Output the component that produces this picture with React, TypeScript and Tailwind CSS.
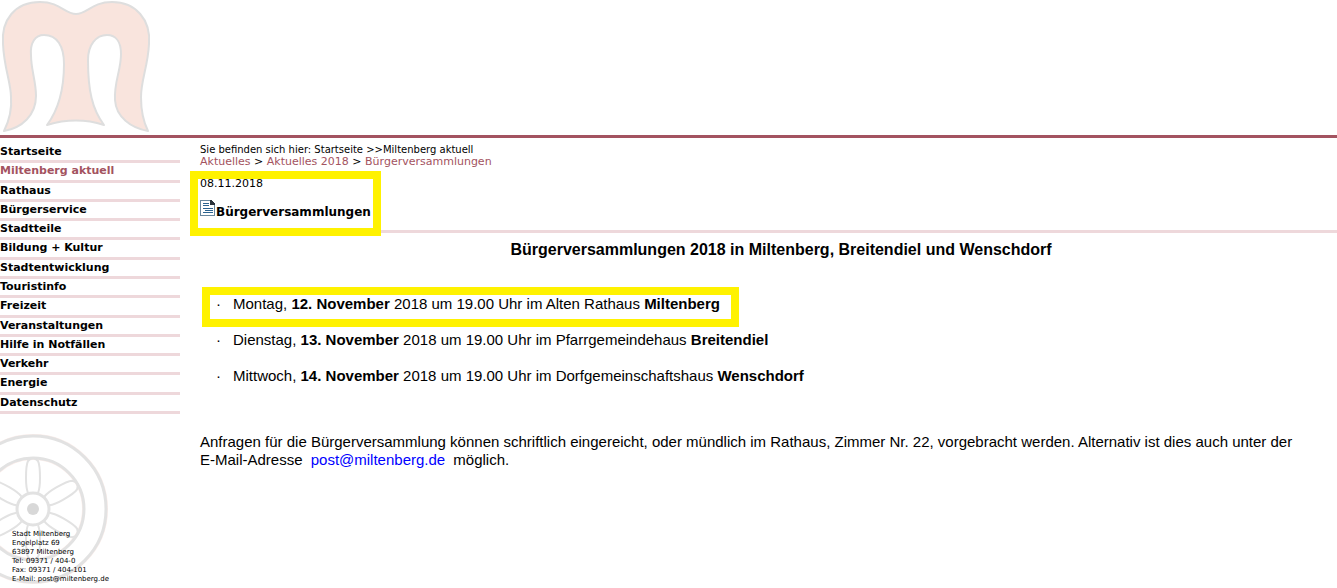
import React from 'react'

const navItems = [
  'Startseite',
  'Miltenberg aktuell',
  'Rathaus',
  'Bürgerservice',
  'Stadtteile',
  'Bildung + Kultur',
  'Stadtentwicklung',
  'Touristinfo',
  'Freizeit',
  'Veranstaltungen',
  'Hilfe in Notfällen',
  'Verkehr',
  'Energie',
  'Datenschutz',
]

const meetings = [
  { day: 'Montag', date: '12. November', place: 'im Alten Rathaus', town: 'Miltenberg', marked: true },
  { day: 'Dienstag', date: '13. November', place: 'im Pfarrgemeindehaus', town: 'Breitendiel', marked: false },
  { day: 'Mittwoch', date: '14. November', place: 'im Dorfgemeinschaftshaus', town: 'Wenschdorf', marked: false },
]

function Logo() {
  return (
    <svg width="152" height="134" viewBox="0 0 152 134" role="img" aria-label="Stadt Miltenberg">
      <path
        d="M4 131 C9 121 12 109 11 97 C11 83 4 68 3 44 C1 20 15 2 40 2 C60 2 65 14 76 14 C87 14 92 2 112 2 C136 2 151 20 149 44 C148 66 141 80 141 97 C141 110 143 121 148 131 C131 128 116 117 115 100 C114 81 121 71 121 54 C121 42 116 35 107 35 C96 35 88 45 88 60 C88 90 92 109 104 125 C85 119 67 119 47 125 C59 109 64 90 64 64 C64 46 57 35 44 35 C35 35 30 43 31 55 C31 70 36 81 36 96 C36 115 22 128 4 131 Z"
        fill="#f9e4dd"
        stroke="#dedede"
        strokeWidth="2"
        strokeLinejoin="round"
      />
    </svg>
  )
}

function Wheel() {
  return (
    <svg width="108" height="150" viewBox="0 0 108 150" aria-hidden="true">
      <g fill="none" stroke="#fbeeeb" strokeWidth="2">
        <circle cx="33" cy="75" r="74" />
        <circle cx="33" cy="75" r="50" />
      </g>
      <g fill="none" stroke="#e2e2e2" strokeWidth="3">
        <circle cx="33" cy="75" r="73" />
        <circle cx="33" cy="75" r="51" />
        <circle cx="33" cy="75" r="16" />
        {[0, 60, 120, 180, 240, 300].map((angle) => (
          <path
            key={angle}
            d="M28 59 C26 54 26 50 26 44 C26 37 26 31 28 27 Q33 21 38 27 C40 31 40 37 40 44 C40 50 40 54 38 59"
            strokeWidth="2"
            transform={`rotate(${angle} 33 75)`}
          />
        ))}
      </g>
      <circle cx="33" cy="75" r="6" fill="#d8d8d8" />
    </svg>
  )
}

function DocumentIcon() {
  return (
    <svg width="15" height="16" viewBox="0 0 15 16" shapeRendering="crispEdges" aria-hidden="true">
      <path d="M0 0H11L15 4V16H0Z" fill="#68879e" />
      <path d="M1 1H10V5H14V15H1Z" fill="#fff" />
      <path d="M10 0H12V1H13V2H14V3H15V5H10Z" fill="#2b333b" />
      <path d="M3 3H9V4H3ZM3 5H9V6H3ZM3 8H13V9H3ZM5 10H13V11H5ZM3 12H13V13H3Z" fill="#2b6390" />
    </svg>
  )
}

export default function App() {
  return (
    <div className="bg-white font-['DejaVu_Sans',Verdana,sans-serif] text-black">
      <header className="h-[138px] border-b-3 border-[#a35360]">
        <Logo />
      </header>

      <div className="flex">
        <aside className="w-[180px] shrink-0 pt-[6px]">
          <nav>
            <ul className="flex h-[270px] flex-col text-[11px] leading-4 font-bold">
              {navItems.map((item) => (
                <li key={item} className="flex-1 border-b-3 border-[#eed8db]">
                  <a href="#" className={item === 'Miltenberg aktuell' ? 'block text-[#a35360]' : 'block'}>
                    {item}
                  </a>
                </li>
              ))}
            </ul>
          </nav>

          <div className="mt-5 grid">
            <div className="col-start-1 row-start-1">
              <Wheel />
            </div>
            <address className="col-start-1 row-start-1 self-end pl-3 text-[7px] leading-[9px] whitespace-nowrap not-italic">
              Stadt Miltenberg
              <br />
              Engelplatz 69
              <br />
              63897 Miltenberg
              <br />
              Tel: 09371 / 404-0
              <br />
              Fax: 09371 / 404-101
              <br />
              E-Mail: post@miltenberg.de
            </address>
          </div>
        </aside>

        <main className="min-w-0 flex-1 pt-[6px] pl-5">
          <p className="text-[10px] leading-3">Sie befinden sich hier: Startseite &gt;&gt;Miltenberg aktuell</p>
          <p className="text-[11px] leading-3">
            <a href="#" className="text-[#a35360]">Aktuelles</a> &gt;{' '}
            <a href="#" className="text-[#a35360]">Aktuelles 2018</a> &gt;{' '}
            <a href="#" className="text-[#a35360]">Bürgerversammlungen</a>
          </p>

          <div className="relative mt-2 h-[57px] border-b-3 border-[#eed8db] pt-[2px]">
            <p className="text-[11px] leading-3">08.11.2018</p>
            <h2 className="mt-[10px] flex text-[12px] leading-4 font-bold">
              <DocumentIcon />
              <span className="pt-1 pl-px">Bürgerversammlungen</span>
            </h2>
            <div className="pointer-events-none absolute -top-[5px] -left-[10px] h-[65px] w-[191px] border-8 border-[#fff200]" />
          </div>

          <div className="pr-[11px] font-['Liberation_Sans',Arial,sans-serif] text-[15px] leading-[18px]">
            <h1 className="mt-2 pl-9 text-center text-[16px] font-bold">
              Bürgerversammlungen 2018 in Miltenberg, Breitendiel und Wenschdorf
            </h1>
            <ul className="mt-9 flex flex-col gap-[18px]">
              {meetings.map((meeting) => (
                <li key={meeting.date} className="relative flex pl-4">
                  <span className="w-[17px] shrink-0">·</span>
                  <span>
                    {meeting.day}, <b>{meeting.date}</b> 2018 um 19.00 Uhr {meeting.place} <b>{meeting.town}</b>
                  </span>
                  {meeting.marked && (
                    <span className="pointer-events-none absolute -top-2 left-[2px] h-10 w-[537px] border-8 border-[#fff200]" />
                  )}
                </li>
              ))}
            </ul>
            <p className="mt-12">
              Anfragen für die Bürgerversammlung können schriftlich eingereicht, oder mündlich im Rathaus, Zimmer Nr.
              22, vorgebracht werden. Alternativ ist dies auch unter der{' '}
              <span className="whitespace-nowrap">E-Mail-Adresse</span>{' '}
              <a href="mailto:post@miltenberg.de" className="mx-1 inline-block text-[#0000ff]">post@miltenberg.de</a>{' '}
              <span>möglich.</span>
            </p>
          </div>
        </main>
      </div>
    </div>
  )
}
